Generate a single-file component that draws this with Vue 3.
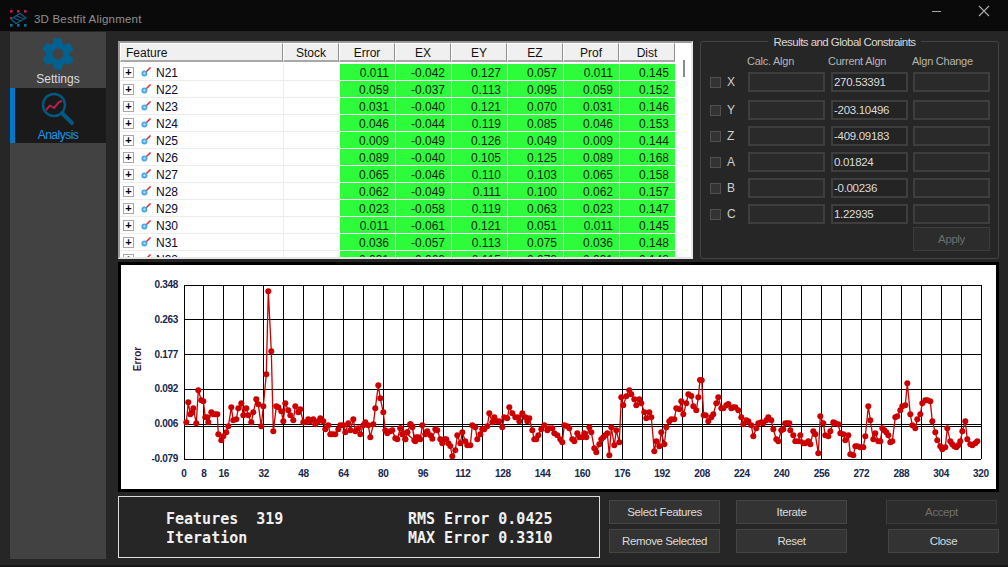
<script setup>
const rows = [
  ['N21','0.011','-0.042','0.127','0.057','0.011','0.145'],
  ['N22','0.059','-0.037','0.113','0.095','0.059','0.152'],
  ['N23','0.031','-0.040','0.121','0.070','0.031','0.146'],
  ['N24','0.046','-0.044','0.119','0.085','0.046','0.153'],
  ['N25','0.009','-0.049','0.126','0.049','0.009','0.144'],
  ['N26','0.089','-0.040','0.105','0.125','0.089','0.168'],
  ['N27','0.065','-0.046','0.110','0.103','0.065','0.158'],
  ['N28','0.062','-0.049','0.111','0.100','0.062','0.157'],
  ['N29','0.023','-0.058','0.119','0.063','0.023','0.147'],
  ['N30','0.011','-0.061','0.121','0.051','0.011','0.145'],
  ['N31','0.036','-0.057','0.113','0.075','0.036','0.148'],
  ['N32','0.031','-0.060','0.115','0.072','0.031','0.148']
]
const columns = ['Error','EX','EY','EZ','Prof','Dist']

const constraints = [
  { axis: 'X', value: '270.53391' },
  { axis: 'Y', value: '-203.10496' },
  { axis: 'Z', value: '-409.09183' },
  { axis: 'A', value: '0.01824' },
  { axis: 'B', value: '-0.00236' },
  { axis: 'C', value: '1.22935' }
]

// Traced points: [zoom x, zoom y] at 3x, with a per-segment origin
const seg1 = '211,487 217,427 223,463 229,457 232,445 241,490 247,391 256,421 262,424 268,472 274,472 277,487 286,457 292,463 298,463 304,463 307,523 316,541 322,529 331,517 337,499 346,442 352,481 361,478 367,445 376,430 382,466 391,445 397,466 406,487 412,457 421,418 427,433 436,499 442,439 451,343 457,94 466,274 472,514 481,439 487,442 496,454 502,484 508,430 517,451 523,466 532,481 538,439 547,457 553,448 562,487 568,487 577,478 583,484 592,478 598,493 607,484 613,475 622,484 628,508 637,496 643,523 649,523 658,523 667,508 673,496 682,496 688,517 697,490 703,511 712,478 718,514 727,505 733,523 742,496 748,487 757,496 763,532 772,493 778,445 787,376 793,415 802,457 808,511 814,520 823,514 829,511 838,535 844,538 853,505 859,523 868,538 874,517 883,493 889,499 895,541'
const seg2 = '20,205 26,223 34,238 40,217 49,193 55,202 64,244 67,232 73,232 79,238 85,196 94,223 100,214 109,226 115,236 124,208 130,211 139,238 145,250 151,238 157,238 163,250 169,258 175,289 184,271 190,226 199,250 205,217 214,244 220,256 229,256 235,196 244,202 250,238 259,223 265,208 271,208 280,199 286,160 295,187 301,172 310,184 316,184 325,202 331,172 340,175 346,142 355,160 364,172 373,172 376,184 385,160 394,172 400,184 406,175 415,211 421,238 427,238 433,226 442,208 451,196 460,211 466,205 475,205 481,220 490,226 499,238 505,247 511,196 520,199 526,205 535,238 541,244 550,220 556,232 565,232 571,220 577,232 586,202 592,217 601,265 607,277 616,253 622,238 628,232 634,226 640,220 646,286 652,202 661,256 667,211 676,247 682,112 688,136 697,109 706,91 712,103 721,118 727,136 736,118 742,130 751,157 757,175 766,157 772,172 781,274 787,244 796,259 802,217 811,253 817,202 826,184 832,178 841,178 847,145 856,148 862,124 868,163 877,130 883,103 892,108 898,139 907,151 913,112 918,60'
const seg3 = '5,61 11,166 17,166 25,184 34,172 40,163 49,130 55,112 64,145 70,145 79,136 85,132 94,145 100,142 106,142 115,151 124,172 130,193 139,181 145,184 154,196 160,229 169,205 175,190 184,187 190,190 199,181 205,172 214,181 220,208 229,238 235,244 244,211 250,208 256,190 262,190 268,190 271,211 280,226 286,244 295,244 301,226 310,250 316,250 325,244 331,253 340,214 346,223 355,280 361,169 370,190 376,226 385,229 391,214 400,187 406,190 415,193 421,220 430,223 436,241 445,226 451,283 460,286 466,259 472,259 481,262 490,262 496,229 505,139 511,181 520,238 526,220 535,244 541,244 547,205 553,211 559,217 565,226 571,247 577,244 586,172 592,169 601,151 607,139 616,136 622,70 631,163 637,196 646,205 652,178 661,163 667,130 676,121 682,121 691,124 697,184 706,217 712,241 721,259 727,268 736,262 742,205 751,244 757,253 763,259 769,262 775,256 781,244 787,214 796,184 802,238 811,253 817,256 826,250 832,244'
const parse = (s, ox, oy) => s.split(' ').map(p => {
  const [x, y] = p.split(',').map(Number)
  return [ox + x / 3, oy + y / 3]
})
// chart svg origin is the inner top-left of the frame (121, 265)
const points = [...parse(seg1, 116, 260), ...parse(seg2, 394, 360), ...parse(seg3, 700, 360)]
  .map(([x, y]) => [+(x - 121).toFixed(1), +(y - 265).toFixed(1)])
const line = points.map(p => p.join(',')).join(' ')

const plot = { l: 63, r: 860, t: 20, b: 194 }
const vLines = Array.from({ length: 41 }, (_, i) => plot.l + (i * (plot.r - plot.l)) / 40)
const hLines = [
  { y: 20, t: '0.348' },
  { y: 54.8, t: '0.263' },
  { y: 89.6, t: '0.177' },
  { y: 124.4, t: '0.092' },
  { y: 159.2, t: '0.006' },
  { y: 194, t: '-0.079' }
]
const xLabels = [0, 8, 16, 32, 48, 64, 80, 96, 112, 128, 144, 160, 176, 192, 208, 224, 240, 256, 272, 288, 304, 320]
const xPos = v => plot.l + (v * (plot.r - plot.l)) / 320
</script>

<template>
  <div class="app">
    <header class="titlebar">
      <svg class="logo" width="30" height="24" viewBox="0 0 30 24">
        <g fill="#c2184f">
          <rect x="10" y="5" width="2.6" height="2.6" />
          <rect x="17" y="5" width="2.6" height="2.6" />
          <rect x="24" y="5" width="2.6" height="2.6" />
          <rect x="10" y="12" width="2" height="2" />
        </g>
        <g fill="#0f6f9c">
          <rect x="10" y="19" width="2.6" height="2.6" />
          <rect x="17" y="19" width="2.6" height="2.6" />
          <rect x="24" y="19" width="2.6" height="2.6" />
        </g>
        <path d="M11 14 L20 8.5 L26 13 L16 18.5 Z M14 13 L21 16 M17 11 L24 14" fill="none" stroke="#0f5f86" stroke-width="1.2" />
      </svg>
      <span class="app-title">3D Bestfit Alignment</span>
      <span class="win-min"></span>
      <svg class="win-close" width="12" height="12" viewBox="0 0 12 12">
        <path d="M1 1 L11 11 M11 1 L1 11" stroke="#a8a8a8" stroke-width="1.2" fill="none" />
      </svg>
    </header>

    <div class="body">
      <nav class="sidebar">
        <div class="nav-item">
          <svg class="gear" width="38" height="38" viewBox="0 0 24 24">
            <path fill="#02618f" d="M19.4 13c.1-.3.1-.7.1-1s0-.7-.1-1l2.1-1.6c.2-.2.2-.4.1-.6l-2-3.5c-.1-.2-.4-.3-.6-.2l-2.5 1c-.5-.4-1.1-.7-1.7-1l-.4-2.6c0-.3-.2-.4-.5-.4h-4c-.3 0-.5.2-.5.4l-.4 2.6c-.6.3-1.2.6-1.7 1l-2.5-1c-.2-.1-.5 0-.6.2l-2 3.5c-.1.2-.1.5.1.6L4.6 11c-.1.3-.1.7-.1 1s0 .7.1 1l-2.1 1.6c-.2.2-.2.4-.1.6l2 3.5c.1.2.4.3.6.2l2.5-1c.5.4 1.1.7 1.7 1l.4 2.6c0 .2.2.4.5.4h4c.3 0 .5-.2.5-.4l.4-2.6c.6-.3 1.2-.6 1.7-1l2.5 1c.2.1.5 0 .6-.2l2-3.5c.1-.2.1-.5-.1-.6L19.4 13zM12 15.5c-1.9 0-3.5-1.6-3.5-3.5s1.6-3.5 3.5-3.5 3.5 1.6 3.5 3.5-1.6 3.5-3.5 3.5z" />
          </svg>
          <span class="nav-label">Settings</span>
        </div>
        <div class="nav-item active">
          <svg class="mag" width="34" height="36" viewBox="0 0 34 36">
            <circle cx="13" cy="14" r="11" fill="none" stroke="#04587f" stroke-width="2.4" />
            <path d="M21 22 L31 32" stroke="#04587f" stroke-width="4" stroke-linecap="round" />
            <path d="M5 19 L9 14.5 L13 17 L18 11 L21 10" fill="none" stroke="#b0204f" stroke-width="2" stroke-linejoin="round" />
          </svg>
          <span class="nav-label">Analysis</span>
        </div>
      </nav>

      <main class="main">
        <section class="top">
          <div class="table">
            <div class="thead">
              <div class="th th-feature">Feature</div>
              <div class="th th-stock">Stock</div>
              <div v-for="c in columns" :key="c" class="th th-num">{{ c }}</div>
            </div>
            <div class="tbody">
              <div v-for="r in rows" :key="r[0]" class="row">
                <div class="td-feature">
                  <span class="expander">+</span>
                  <svg class="probe" width="12" height="12" viewBox="0 0 12 12">
                    <path d="M6 6 L10.5 1.5" stroke="#e02020" stroke-width="1.4" />
                    <circle cx="4.4" cy="7.4" r="3" fill="#4aa8e8" />
                    <circle cx="4.4" cy="7.4" r="1.1" fill="#bfe4fa" />
                  </svg>
                  <span class="name">{{ r[0] }}</span>
                </div>
                <div class="td-stock"></div>
                <div v-for="(v, i) in r.slice(1)" :key="i" class="td-num">{{ v }}</div>
              </div>
            </div>
            <div class="thumb"></div>
          </div>

          <div class="results">
            <span class="legend">Results and Global Constraints</span>
            <div class="res-head">
              <span>Calc. Algn</span>
              <span>Current Algn</span>
              <span>Algn Change</span>
            </div>
            <div class="res-rows">
              <div v-for="c in constraints" :key="c.axis" class="res-row">
                <span class="check"></span>
                <span class="axis">{{ c.axis }}</span>
                <div class="field"></div>
                <div class="field current">{{ c.value }}</div>
                <div class="field"></div>
              </div>
            </div>
            <div class="apply-row">
              <div class="btn disabled apply">Apply</div>
            </div>
          </div>
        </section>

        <section class="chart">
          <svg width="875" height="224" viewBox="0 0 875 224">
            <g shape-rendering="crispEdges" stroke="#000" stroke-width="1">
              <line v-for="(x, i) in vLines" :key="'v' + i" :x1="x" :x2="x" :y1="plot.t" :y2="plot.b" />
              <line v-for="h in hLines" :key="h.t" :x1="plot.l" :x2="plot.r" :y1="h.y" :y2="h.y" />
              <line :x1="plot.l" :x2="plot.r" y1="161" y2="161" />
            </g>
            <polyline :points="line" fill="none" stroke="#cc0000" stroke-width="1.3" />
            <circle v-for="(p, i) in points" :key="i" :cx="p[0]" :cy="p[1]" r="3" fill="#cc0000" />
            <text v-for="h in hLines" :key="'l' + h.t" class="tick" :x="plot.l - 6" :y="h.y + 3" text-anchor="end">{{ h.t }}</text>
            <text v-for="v in xLabels" :key="'x' + v" class="tick" :x="xPos(v)" y="212" text-anchor="middle">{{ v }}</text>
            <text class="axis-title" transform="translate(20 94) rotate(-90)" text-anchor="middle">Error</text>
          </svg>
        </section>

        <section class="bottom">
          <div class="stats">
            <div class="stat-col">
              <div>Features&nbsp;&nbsp;319</div>
              <div>Iteration</div>
            </div>
            <div class="stat-col">
              <div>RMS Error 0.0425</div>
              <div>MAX Error 0.3310</div>
            </div>
          </div>
          <div class="actions">
            <div class="act-col">
              <div class="btn">Select Features</div>
              <div class="btn">Remove Selected</div>
            </div>
            <div class="act-col">
              <div class="btn">Iterate</div>
              <div class="btn">Reset</div>
            </div>
            <div class="act-col last">
              <div class="btn disabled accept">Accept</div>
              <div class="btn close">Close</div>
            </div>
          </div>
        </section>
      </main>
    </div>
  </div>
</template>

<style>
html, body { margin: 0; background: #262626; overflow: hidden; }
</style>

<style scoped>
.app {
  width: 1008px;
  height: 567px;
  display: flex;
  flex-direction: column;
  background: #262626;
  font-family: "Liberation Sans", Arial, sans-serif;
  font-size: 12px;
  overflow: hidden;
}
.titlebar {
  height: 31px;
  flex: none;
  background: #0a0a0a;
  display: flex;
  align-items: center;
  position: relative;
}
.logo { flex: none; margin-top: 3px; }
.app-title {
  margin-left: 4px;
  color: #8f8f8f;
  font-size: 11.5px;
  letter-spacing: 0.2px;
  margin-top: 6px;
}
.win-min {
  position: absolute;
  left: 932px;
  top: 11px;
  width: 9px;
  height: 1px;
  background: #a8a8a8;
}
.win-close { position: absolute; left: 978px; top: 5px; }

.body { flex: 1; display: flex; min-height: 0; border-bottom: 2px solid #161616; }
.sidebar {
  width: 96px;
  margin: 1px 0 6px 10px;
  background: #424242;
  flex: none;
}
.nav-item {
  height: 55px;
  display: flex;
  flex-direction: column;
  align-items: center;
  position: relative;
  box-sizing: border-box;
}
.nav-item:first-child { height: 56px; padding-top: 3px; }
.gear { flex: none; margin-bottom: -2px; }
.nav-label { color: #dcdcdc; font-size: 12px; line-height: 14px; margin-top: 1px; }
.nav-item.active {
  background: #1a1a1a;
  padding-top: 3px;
  border-left: 5px solid #0078cc;
  padding-right: 5px;
}
.mag { flex: none; }
.active .nav-label { color: #1a95e8; margin-top: 1px; letter-spacing: -0.5px; }

.main {
  flex: 1;
  min-width: 0;
  padding: 10px 9px 0 12px;
  display: flex;
  flex-direction: column;
}
.top { display: flex; gap: 7px; height: 218px; flex: none; }

.table {
  width: 575px;
  height: 218px;
  box-sizing: border-box;
  background: #fff;
  border: 2px solid #9a9a9a;
  border-right-color: #e6e6e6;
  border-bottom-color: #e6e6e6;
  position: relative;
  overflow: hidden;
  flex: none;
}
.thead { display: flex; height: 19px; }
.th {
  box-sizing: border-box;
  background: #f0f0f0;
  border-right: 1px solid #8e8e8e;
  border-bottom: 2px solid #a8a8a8;
  border-left: 1px solid #fff;
  border-top: 1px solid #fff;
  text-align: center;
  line-height: 18px;
  color: #111;
  font-size: 12px;
}
.th-feature { width: 163px; text-align: left; padding-left: 5px; }
.th-stock { width: 56px; }
.th-num { width: 56px; }
.tbody { padding-top: 2px; }
.row { display: flex; height: 17px; }
.td-feature {
  width: 163px;
  box-sizing: border-box;
  display: flex;
  align-items: center;
  border-bottom: 1px solid #ececec;
  padding-left: 3px;
}
.td-stock {
  width: 57px;
  box-sizing: border-box;
  border-bottom: 1px solid #ececec;
  border-left: 1px solid #ececec;
}
.td-num {
  width: 55px;
  margin-right: 1px;
  box-sizing: border-box;
  background: #2dfc3a;
  border-bottom: 1px solid #fff;
  text-align: right;
  padding-right: 6px;
  line-height: 18px;
  color: #1c1c1c;
}
.expander {
  width: 9px;
  height: 9px;
  border: 1px solid #a8a8a8;
  display: flex;
  align-items: center;
  justify-content: center;
  color: #000;
  font-size: 11px;
  line-height: 9px;
  flex: none;
  font-weight: bold;
}
.probe { margin-left: 6px; flex: none; }
.name { margin-left: 4px; color: #0a0a30; font-size: 12px; line-height: 16px; padding-top: 2px; }
.thumb {
  position: absolute;
  left: 563px;
  top: 17px;
  width: 2px;
  height: 17px;
  background: #8a8a8a;
}

.results {
  width: 299px;
  height: 218px;
  box-sizing: border-box;
  border: 1px solid #444;
  border-radius: 3px;
  flex: none;
  position: relative;
}
.legend {
  position: absolute;
  top: -6px;
  left: 0;
  right: 10px;
  width: max-content;
  margin: 0 auto;
  padding: 0 5px;
  background: #262626;
  color: #d8d8d8;
  font-size: 11.5px;
  letter-spacing: -0.55px;
  line-height: 13px;
}
.res-head {
  position: absolute;
  top: 12px;
  left: 46px;
  display: grid;
  grid-template-columns: 81px 84px 84px;
  color: #b5b5b5;
  font-size: 11px;
  letter-spacing: -0.25px;
  line-height: 14px;
}
.res-rows {
  position: absolute;
  top: 30px;
  left: 9px;
  display: flex;
  flex-direction: column;
  gap: 6px;
}
.res-row {
  display: flex;
  align-items: center;
  height: 20px;
}
.res-row:first-child { margin-bottom: 2px; }
.check {
  width: 9px;
  height: 9px;
  border: 1px solid #505050;
  background: #333;
  flex: none;
}
.axis { width: 21px; margin-left: 6px; color: #cfcfcf; font-size: 12px; }
.field {
  width: 77px;
  height: 20px;
  box-sizing: border-box;
  background: #2a2a2a;
  border: 2px solid #3e3e3e;
  margin-right: 5px;
  color: #dcdcdc;
  font-size: 11.5px;
  letter-spacing: -0.3px;
  line-height: 16px;
  padding-left: 1px;
  flex: none;
}
.axis + .field { margin-right: 6px; }
.field.current { background: #242424; }
.apply-row { position: absolute; right: 8px; top: 185px; }
.btn {
  box-sizing: border-box;
  background: #333;
  border: 1px solid #454545;
  color: #dcdcdc;
  display: flex;
  align-items: center;
  justify-content: center;
  width: 111px;
  height: 24px;
  font-size: 11.5px;
  letter-spacing: -0.4px;
}
.btn.disabled { color: #6f6f6f; background: #2c2c2c; border-color: #3c3c3c; }
.apply { width: 77px; }

.chart {
  margin-top: 3px;
  width: 881px;
  height: 230px;
  box-sizing: border-box;
  border: 3px solid #000;
  background: #fff;
  flex: none;
  overflow: hidden;
}
.chart svg { display: block; }
.tick {
  font-family: "Liberation Sans", Arial, sans-serif;
  font-size: 10px;
  letter-spacing: -0.3px;
  font-weight: bold;
  fill: #16264c;
}
.axis-title {
  font-family: "Liberation Sans", Arial, sans-serif;
  font-size: 10px;
  font-weight: bold;
  fill: #3a1540;
}

.bottom { display: flex; margin-top: 4px; }
.stats {
  width: 482px;
  height: 62px;
  box-sizing: border-box;
  border: 1px solid #dedede;
  display: flex;
  padding: 13px 0 0 47px;
  color: #f0f0f0;
  font-family: "DejaVu Sans Mono", "Liberation Mono", monospace;
  font-size: 15px;
  font-weight: bold;
  line-height: 19px;
  flex: none;
}
.stat-col:first-child { width: 242px; flex: none; }
.actions { display: flex; margin-left: 9px; padding-top: 4px; }
.act-col { display: flex; flex-direction: column; gap: 5px; margin-right: 16px; }
.act-col:nth-child(2) { margin-right: 39px; }
.act-col.last { margin-right: 0; }
.close { margin-left: 2px; }
</style>
